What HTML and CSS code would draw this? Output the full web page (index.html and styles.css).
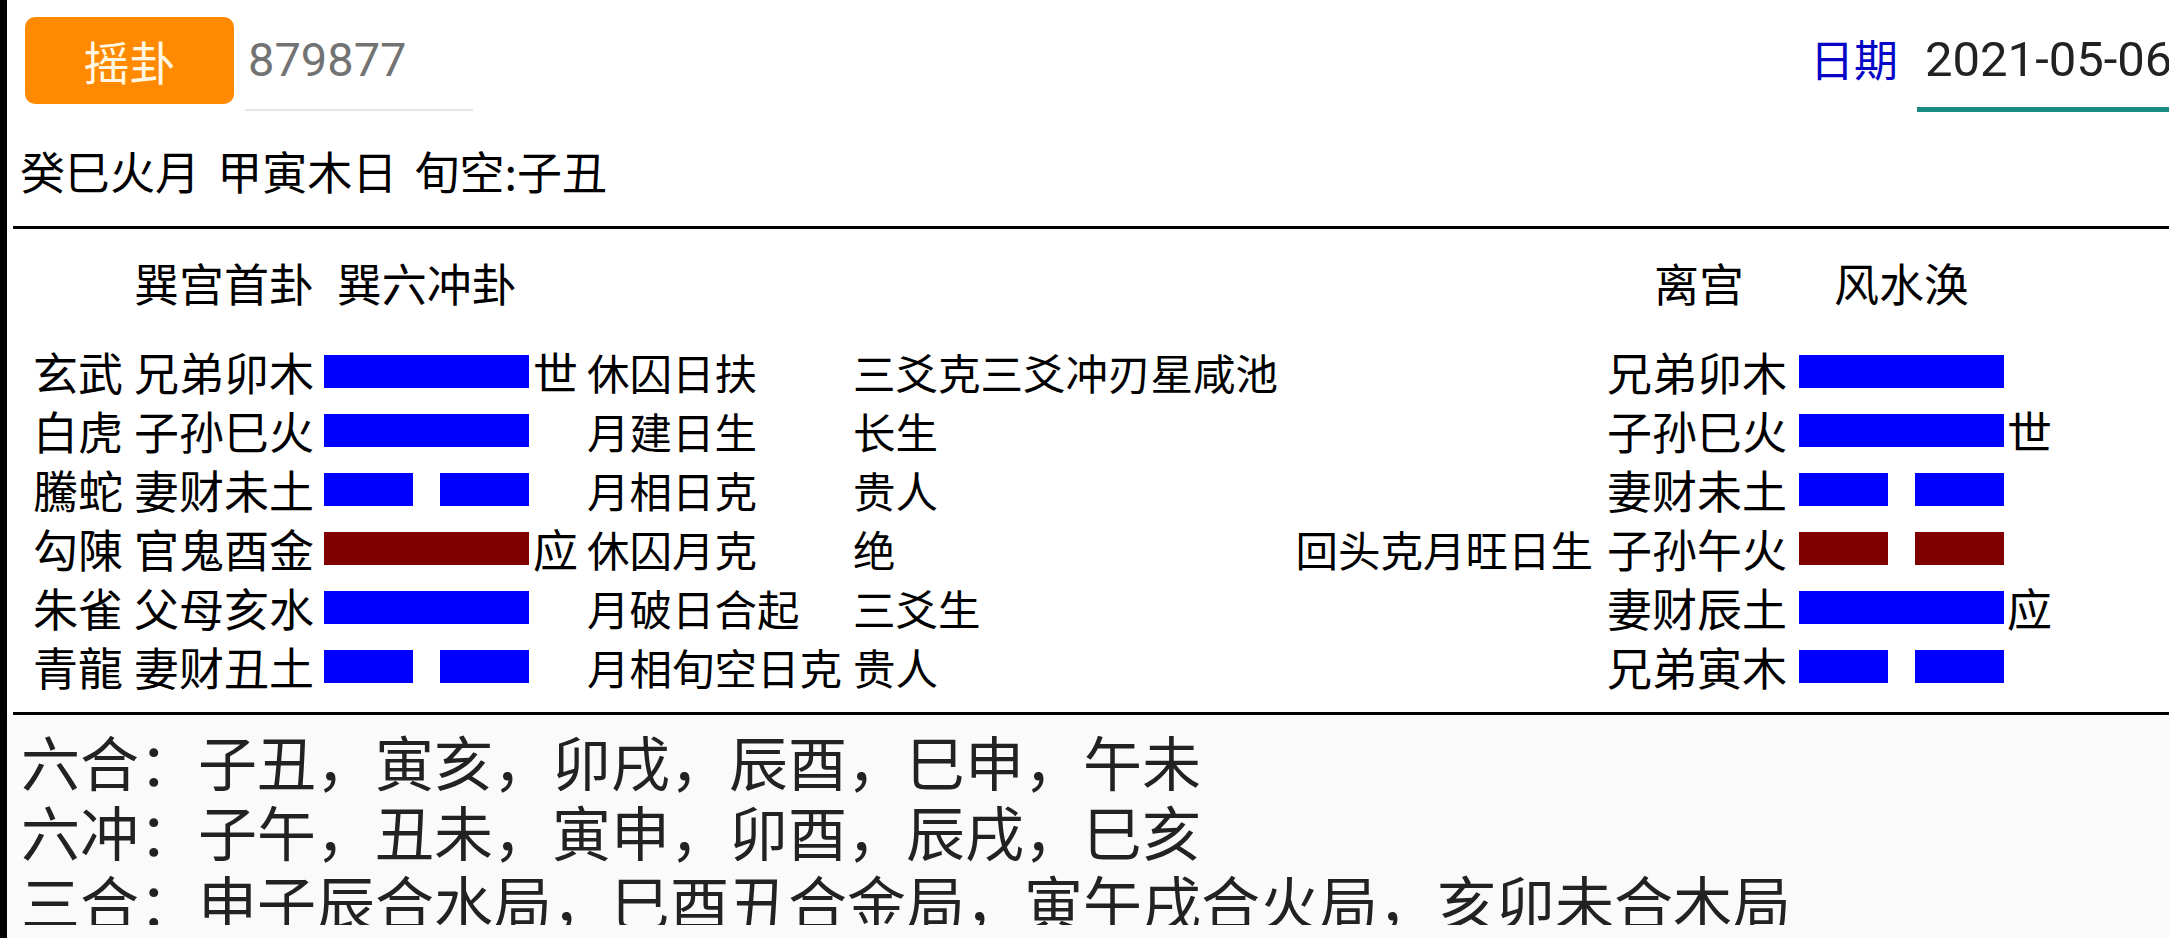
FILE: index.html
```html
<!DOCTYPE html>
<html lang="zh-CN">
<head>
<meta charset="utf-8">
<title>六爻排盘</title>
<link rel="stylesheet" href="styles.css">
</head>
<body>
<div class="app">
  <header class="top">
    <button class="shake-btn">摇卦</button>
    <div class="num-input">879877</div>
    <div class="date-group">
      <span class="date-label">日期</span>
      <div class="date-input">2021-05-06</div>
    </div>
  </header>

  <div class="ganzhi">癸巳火月 甲寅木日 旬空:子丑</div>
  <div class="rule"></div>

  <section class="gua">
    <div class="gua-grid gua-title">
      <div class="c-name span-left">巽宫首卦 巽六冲卦</div>
      <div class="c-bname span-right"><span class="palace">离宫</span><span class="bname">风水涣</span></div>
    </div>

    <div class="gua-grid gua-rows">
      <div>玄武</div><div>兄弟卯木</div><div class="bar yang"></div><div class="shi">世</div><div class="info">休囚日扶</div><div class="info">三爻克三爻冲刃星咸池</div><div class="note"></div><div>兄弟卯木</div><div class="bar yang"></div><div class="shi r"></div>

      <div>白虎</div><div>子孙巳火</div><div class="bar yang"></div><div class="shi"></div><div class="info">月建日生</div><div class="info">长生</div><div class="note"></div><div>子孙巳火</div><div class="bar yang"></div><div class="shi r">世</div>

      <div>騰蛇</div><div>妻财未土</div><div class="bar yin"><i></i><i></i></div><div class="shi"></div><div class="info">月相日克</div><div class="info">贵人</div><div class="note"></div><div>妻财未土</div><div class="bar yin"><i></i><i></i></div><div class="shi r"></div>

      <div>勾陳</div><div>官鬼酉金</div><div class="bar yang moving"></div><div class="shi">应</div><div class="info">休囚月克</div><div class="info">绝</div><div class="note">回头克月旺日生</div><div>子孙午火</div><div class="bar yin moving"><i></i><i></i></div><div class="shi r"></div>

      <div>朱雀</div><div>父母亥水</div><div class="bar yang"></div><div class="shi"></div><div class="info">月破日合起</div><div class="info">三爻生</div><div class="note"></div><div>妻财辰土</div><div class="bar yang"></div><div class="shi r">应</div>

      <div>青龍</div><div>妻财丑土</div><div class="bar yin"><i></i><i></i></div><div class="shi"></div><div class="info">月相旬空日克</div><div class="info">贵人</div><div class="note"></div><div>兄弟寅木</div><div class="bar yin"><i></i><i></i></div><div class="shi r"></div>
    </div>
  </section>

  <div class="rule rule-bottom"></div>

  <section class="notes">
    <div class="notes-inner">
      <p>六合：子丑，寅亥，卯戌，辰酉，巳申，午未</p>
      <p>六冲：子午，丑未，寅申，卯酉，辰戌，巳亥</p>
      <p>三合：申子辰合水局，巳酉丑合金局，寅午戌合火局，亥卯未合木局</p>
    </div>
  </section>
</div>
</body>
</html>
```

FILE: styles.css
```css
html, body {
  margin: 0;
  padding: 0;
  overflow: hidden;
  background: #ffffff;
}

.app {
  width: 2169px;
  height: 938px;
  box-sizing: border-box;
  border-left: 7px solid #000;
  overflow: hidden;
  font-family: "Noto Sans CJK SC", "Noto Sans", sans-serif;
  color: #000;
  display: flex;
  flex-direction: column;
}

/* ---------- top bar ---------- */
.top {
  display: flex;
  align-items: flex-start;
  padding-top: 17px;
  padding-left: 18px;
  height: 95px;
  flex: none;
}

.shake-btn {
  width: 209px;
  height: 87px;
  border: none;
  border-radius: 10px;
  background: #ff8a00;
  color: #fff7e4;
  font-family: "Noto Sans CJK SC", sans-serif;
  font-size: 46px;
  line-height: 87px;
  padding: 0;
}

.num-input {
  margin-left: 11px;
  width: 225px;
  height: 92px;
  border-bottom: 2px solid #e4e4e4;
  box-sizing: content-box;
  font-family: Roboto, "Liberation Sans", sans-serif;
  font-size: 47px;
  line-height: 86px;
  color: #737373;
  padding-left: 3px;
}

.date-group {
  margin-left: auto;
  display: flex;
  align-items: flex-start;
}

.date-label {
  font-size: 44px;
  line-height: 83px;
  color: #0505c8;
  margin-right: 19px;
}

.date-input {
  width: 244px;
  height: 90px;
  padding-left: 8px;
  border-bottom: 5px solid #1a8b80;
  font-family: Roboto, "Liberation Sans", sans-serif;
  font-size: 49px;
  line-height: 86px;
  color: #222222;
  white-space: nowrap;
}

/* ---------- ganzhi line ---------- */
.ganzhi {
  margin-top: 29px;
  padding-left: 13px;
  font-size: 45px;
  line-height: 60px;
  word-spacing: 0.16em;
  flex: none;
}

.rule {
  margin-top: 25px;
  margin-left: 6px;
  height: 3px;
  background: #000;
  flex: none;
}

/* ---------- hexagram ---------- */
.gua {
  font-size: 45px;
  flex: none;
}

.gua-grid {
  display: grid;
  grid-template-columns: 101px 190px 205px 58px 266px 430px 324px 192px 205px 1fr;
  padding-left: 26px;
  white-space: nowrap;
}

.gua-title {
  margin-top: 24px;
  height: 59px;
  line-height: 59px;
  word-spacing: 0.28em;
}

.span-left {
  grid-column: 2 / span 5;
}

.span-right {
  grid-column: 8 / span 3;
  display: flex;
  padding-left: 47px;
}

.palace {
  margin-right: 90px;
}

.gua-rows {
  margin-top: 30px;
  grid-auto-rows: 59px;
  align-items: center;
  line-height: 59px;
}

.info,
.note {
  font-size: 42.5px;
}

.bar {
  height: 33px;
}

.bar.yang {
  background: #0000ff;
}

.bar.yang.moving {
  background: #800000;
}

.bar.yin {
  display: flex;
  justify-content: space-between;
}

.bar.yin i {
  width: 89px;
  height: 33px;
  background: #0000ff;
}

.bar.yin.moving i {
  background: #800000;
}

.shi {
  padding-left: 4px;
}

.shi.r {
  padding-left: 3px;
}

.note {
  text-align: right;
  padding-right: 14px;
}

/* ---------- notes ---------- */
.rule-bottom {
  margin-top: 16px;
}

.notes {
  flex: 1;
  background: #fafafa;
  padding-top: 11px;
}

.notes-inner {
  height: 199px;
  overflow: hidden;
  padding-left: 14px;
}

.notes-inner p {
  margin: 0;
  font-size: 59px;
  line-height: 70px;
  color: #222222;
  white-space: nowrap;
}
```
